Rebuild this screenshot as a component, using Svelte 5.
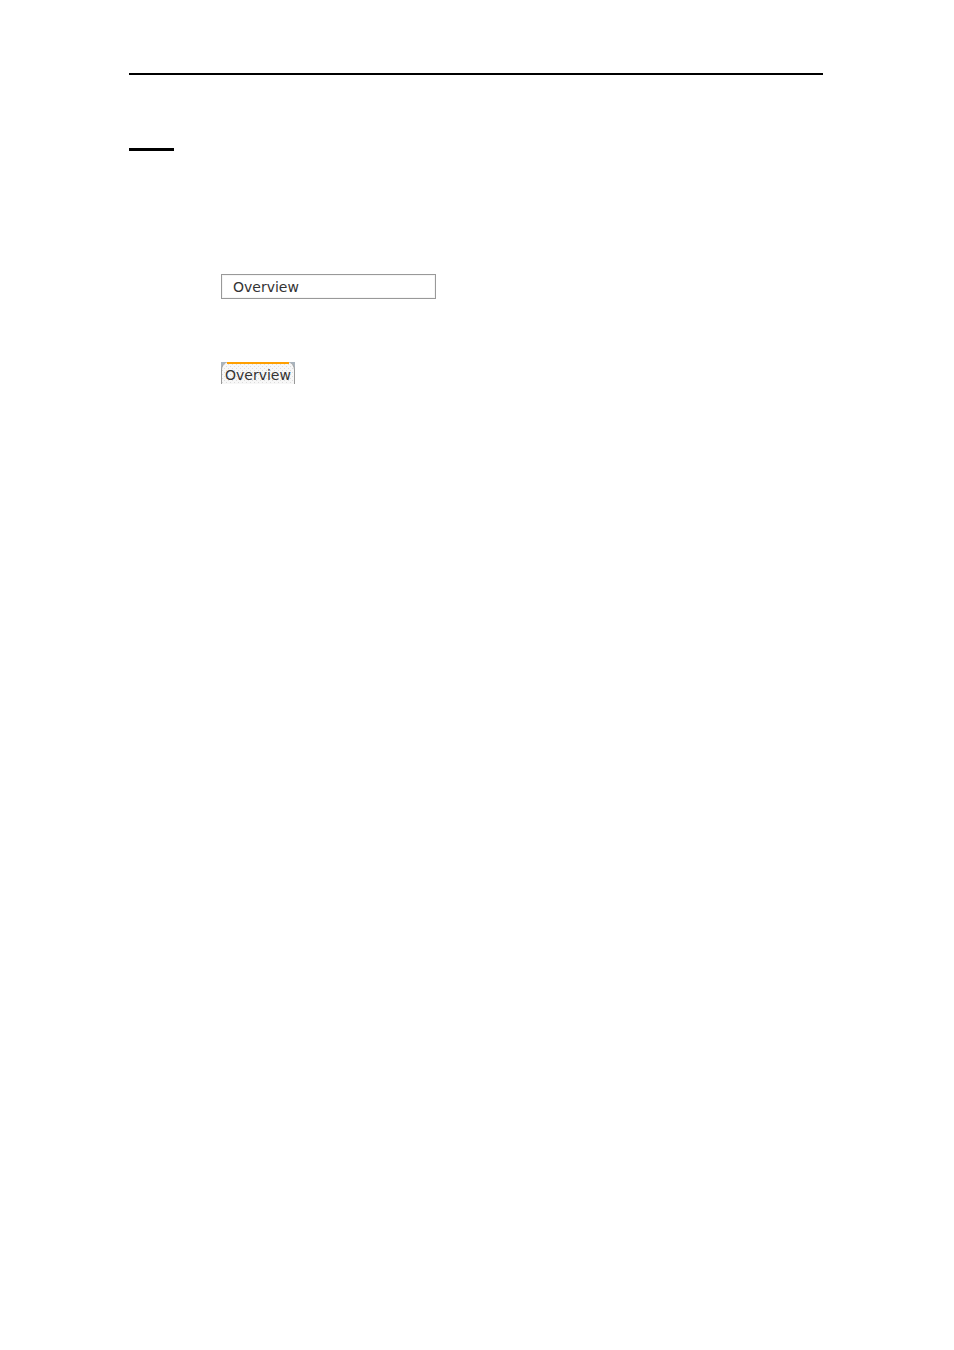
<script>
  let title = 'Overview';
  let selected = true;
</script>

<main class="page">
  <hr class="rule" />
  <hr class="mark" />

  <div class="content">
    <input class="field" type="text" aria-label="Title" bind:value={title} />

    <div class="tabs" role="tablist">
      <button class="tab" role="tab" aria-selected={selected} on:click={() => (selected = true)}>
        Overview
      </button>
    </div>
  </div>
</main>

<style>
  :global(body) {
    background: #fff;
  }

  .page {
    padding: 73px 131px 0 129px;
  }

  hr {
    border: none;
    background: #000;
  }

  .rule {
    height: 2px;
    margin: 0 0 73px;
  }

  .mark {
    width: 45px;
    height: 3px;
    margin: 0;
  }

  .content {
    display: flex;
    flex-direction: column;
    align-items: flex-start;
    gap: 63px;
    padding: 123px 0 0 92px;
  }

  .field,
  .tab {
    box-sizing: border-box;
    color: #333;
    font-family: "DejaVu Sans", Verdana, sans-serif;
    font-size: 14px;
    line-height: 20px;
  }

  .field {
    width: 215px;
    max-width: 100%;
    height: 25px;
    padding: 1px 11px 0;
    border: 1px solid #999;
    border-radius: 0;
    outline: none;
    background: #fff;
    box-shadow: inset 0 0 0 1px #f6f6f6;
  }

  /* grey-blue shows behind the rounded corners of the tab */
  .tabs {
    display: flex;
    background: linear-gradient(#a9b4be 8px, #fff 8px);
  }

  .tab {
    position: relative;
    height: 22px;
    padding: 3px 3px 0;
    border: 1px solid #999;
    border-top: none;
    border-bottom: none;
    border-radius: 8px 8px 0 0;
    background-color: #f7f7f7;
    background-image:
      conic-gradient(at 1px 1px, transparent 75%, #dcdcdc 0),
      conic-gradient(at 1px 1px, transparent 75%, #dcdcdc 0);
    background-position: 0 0, 2px 2px;
    background-size: 4px 4px;
    cursor: pointer;
  }

  .tab::before {
    content: '';
    position: absolute;
    top: 0;
    left: 5px;
    right: 5px;
    height: 2px;
    background: #ff9f00;
  }
</style>
